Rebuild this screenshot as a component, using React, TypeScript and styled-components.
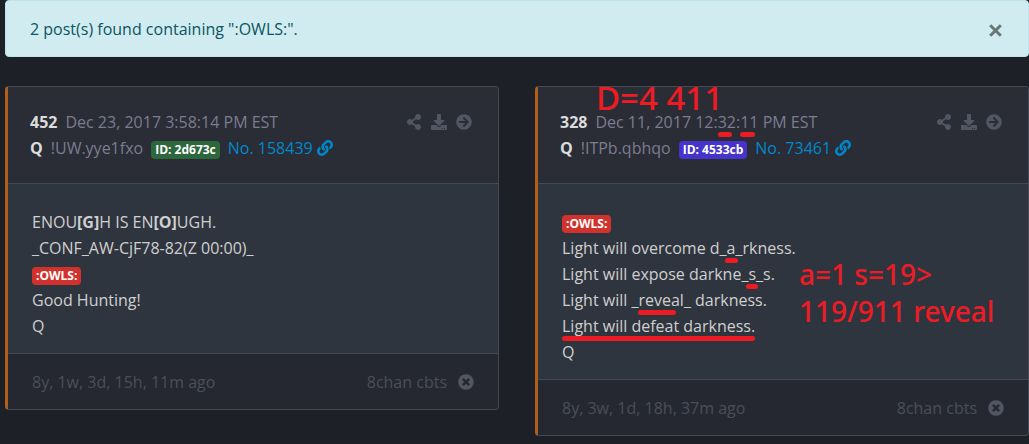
import React, { ReactNode } from "react";
import styled, { createGlobalStyle } from "styled-components";
import { FaShareAlt, FaDownload, FaArrowCircleRight, FaTimesCircle, FaLink } from "react-icons/fa";

const GlobalStyle = createGlobalStyle`
  * { box-sizing: border-box; }
  body {
    margin: 0;
    background: #1e2027;
    color: #cfcfcf;
    font-family: "Open Sans", "Noto Sans", sans-serif;
    font-size: 16px;
    line-height: 26px;
  }
`;

const Page = styled.main`
  padding: 0 0 8px 5px;
`;

const Alert = styled.div`
  display: flex;
  align-items: center;
  justify-content: space-between;
  padding: 15px 24px 14px;
  border: 1px solid #bee5eb;
  border-radius: 4px;
  background: #d1ecf1;
  color: #0c5460;
`;

const CloseButton = styled.button`
  display: flex;
  padding: 2px 2px 0;
  border: 0;
  background: none;
  color: #687678;
  cursor: pointer;
`;

const Posts = styled.section`
  display: grid;
  grid-template-columns: repeat(2, minmax(0, 1fr));
  align-items: start;
  gap: 36px;
  margin-top: 29px;
`;

const Card = styled.article`
  position: relative;
  border: 1px solid #454954;
  border-left: 3px solid #af5f18;
  border-radius: 4px;
  background: #2f353f;
`;

const CardHeader = styled.header`
  display: flex;
  justify-content: space-between;
  padding: 22px;
  border-bottom: 1px solid #454954;
  border-radius: 0 3px 0 0;
  background: #2a2d35;
`;

const MetaRow = styled.div`
  display: flex;
  align-items: baseline;
  gap: 8px;
  white-space: nowrap;
  color: #7c7c91;
`;

const Strong = styled.strong`
  color: #dcdcdc;
`;

const Badge = styled.span<{ $color: string }>`
  display: inline-block;
  padding: 0 4px;
  border-radius: 4px;
  background: ${(p) => p.$color};
  color: #fff;
  font-size: 12px;
  font-weight: 700;
  line-height: 18px;
  white-space: nowrap;
`;

const PostLink = styled.a`
  display: flex;
  align-items: center;
  gap: 4px;
  color: #0088cc;
  text-decoration: none;
`;

const Actions = styled.nav`
  display: flex;
  gap: 9px;
  height: 26px;
  align-items: center;
  padding-right: 4px;
`;

const IconButton = styled.button`
  display: flex;
  padding: 0;
  border: 0;
  background: none;
  color: #525663;
  cursor: pointer;
`;

const CardBody = styled.div`
  padding: 25px 24px 14px;
`;

const Line = styled.div`
  min-height: 26px;
`;

const CardFooter = styled.footer`
  display: flex;
  justify-content: space-between;
  padding: 15px 24px 14px;
  border-top: 1px solid #454954;
  border-radius: 0 0 3px 0;
  background: #252830;
  color: #4b4e5b;
`;

const Source = styled.div`
  display: flex;
  align-items: center;
  gap: 11px;
`;

/* Hand-drawn underline; start and end pull the stroke in from the word's edges. */
const Marked = styled.span<{ $start?: number; $end?: number }>`
  position: relative;
  &::after {
    content: "";
    position: absolute;
    left: ${(p) => p.$start ?? 0}px;
    right: ${(p) => p.$end ?? 0}px;
    bottom: -4px;
    height: 5px;
    border-radius: 3px;
    background: #ed1c24;
  }
`;

const Note = styled.div<{ $top: number; $left: number; $size: number; $line: number }>`
  position: absolute;
  top: ${(p) => p.$top}px;
  left: ${(p) => p.$left}px;
  color: #ed1c24;
  font-family: "Noto Sans", "Open Sans", sans-serif;
  font-size: ${(p) => p.$size}px;
  font-weight: 500;
  line-height: ${(p) => p.$line}px;
  white-space: nowrap;
`;

type PostProps = {
  number: string;
  date: ReactNode;
  trip: string;
  id: string;
  idColor: string;
  link: string;
  lines: ReactNode[];
  age: string;
  children?: ReactNode;
};

function Post({ number, date, trip, id, idColor, link, lines, age, children }: PostProps) {
  return (
    <Card>
      <CardHeader>
        <div>
          <MetaRow>
            <Strong>{number}</Strong>
            <span>{date}</span>
          </MetaRow>
          <MetaRow>
            <Strong>Q</Strong>
            <span>{trip}</span>
            <Badge $color={idColor}>ID: {id}</Badge>
            <PostLink href="#">
              No. {link} <FaLink size={16} />
            </PostLink>
          </MetaRow>
        </div>
        <Actions aria-label="Post actions">
          <IconButton aria-label="Share"><FaShareAlt size={16} /></IconButton>
          <IconButton aria-label="Download"><FaDownload size={16} /></IconButton>
          <IconButton aria-label="Open post"><FaArrowCircleRight size={16} /></IconButton>
        </Actions>
      </CardHeader>
      <CardBody>
        {lines.map((line, i) => (
          <Line key={i}>{line}</Line>
        ))}
      </CardBody>
      <CardFooter>
        <span>{age}</span>
        <Source>
          8chan cbts
          <IconButton aria-label="Dismiss"><FaTimesCircle size={16} /></IconButton>
        </Source>
      </CardFooter>
      {children}
    </Card>
  );
}

const owls = <Badge $color="#d2322d">:OWLS:</Badge>;

export default function App() {
  return (
    <>
      <GlobalStyle />
      <Page>
        <Alert role="status">
          <span>2 post(s) found containing ":OWLS:".</span>
          <CloseButton aria-label="Close">
            <svg width="13" height="13" viewBox="0 0 13 13" stroke="currentColor" strokeWidth="3">
              <path d="M1.2 1.2 11.8 11.8M11.8 1.2 1.2 11.8" />
            </svg>
          </CloseButton>
        </Alert>
        <Posts>
          <Post
            number="452"
            date="Dec 23, 2017 3:58:14 PM EST"
            trip="!UW.yye1fxo"
            id="2d673c"
            idColor="#2d673c"
            link="158439"
            age="8y, 1w, 3d, 15h, 11m ago"
            lines={[
              <>ENOU<b>[G]</b>H IS EN<b>[O]</b>UGH.</>,
              "_CONF_AW-CjF78-82(Z 00:00)_",
              owls,
              "Good Hunting!",
              "Q",
            ]}
          />
          <Post
            number="328"
            date={
              <>
                Dec 11, 2017 12:<Marked $end={4}>32</Marked>:<Marked $end={4}>11</Marked> PM EST
              </>
            }
            trip="!ITPb.qbhqo"
            id="4533cb"
            idColor="#4533cb"
            link="73461"
            age="8y, 3w, 1d, 18h, 37m ago"
            lines={[
              owls,
              <>Light will overcome d_<Marked $start={-2} $end={-2}>a</Marked>_rkness.</>,
              <>Light will expose darkne_<Marked $start={-2} $end={-2}>s</Marked>_s.</>,
              <>Light will _<Marked $end={8}>reveal</Marked>_ darkness.</>,
              <Marked>Light will defeat darkness.</Marked>,
              "Q",
            ]}
          >
            <Note $top={-7} $left={58} $size={33} $line={36}>D=4 411</Note>
            <Note $top={169} $left={261} $size={28} $line={37}>
              a=1 s=19&gt;
              <br />
              119/911 reveal
            </Note>
          </Post>
        </Posts>
      </Page>
    </>
  );
}
